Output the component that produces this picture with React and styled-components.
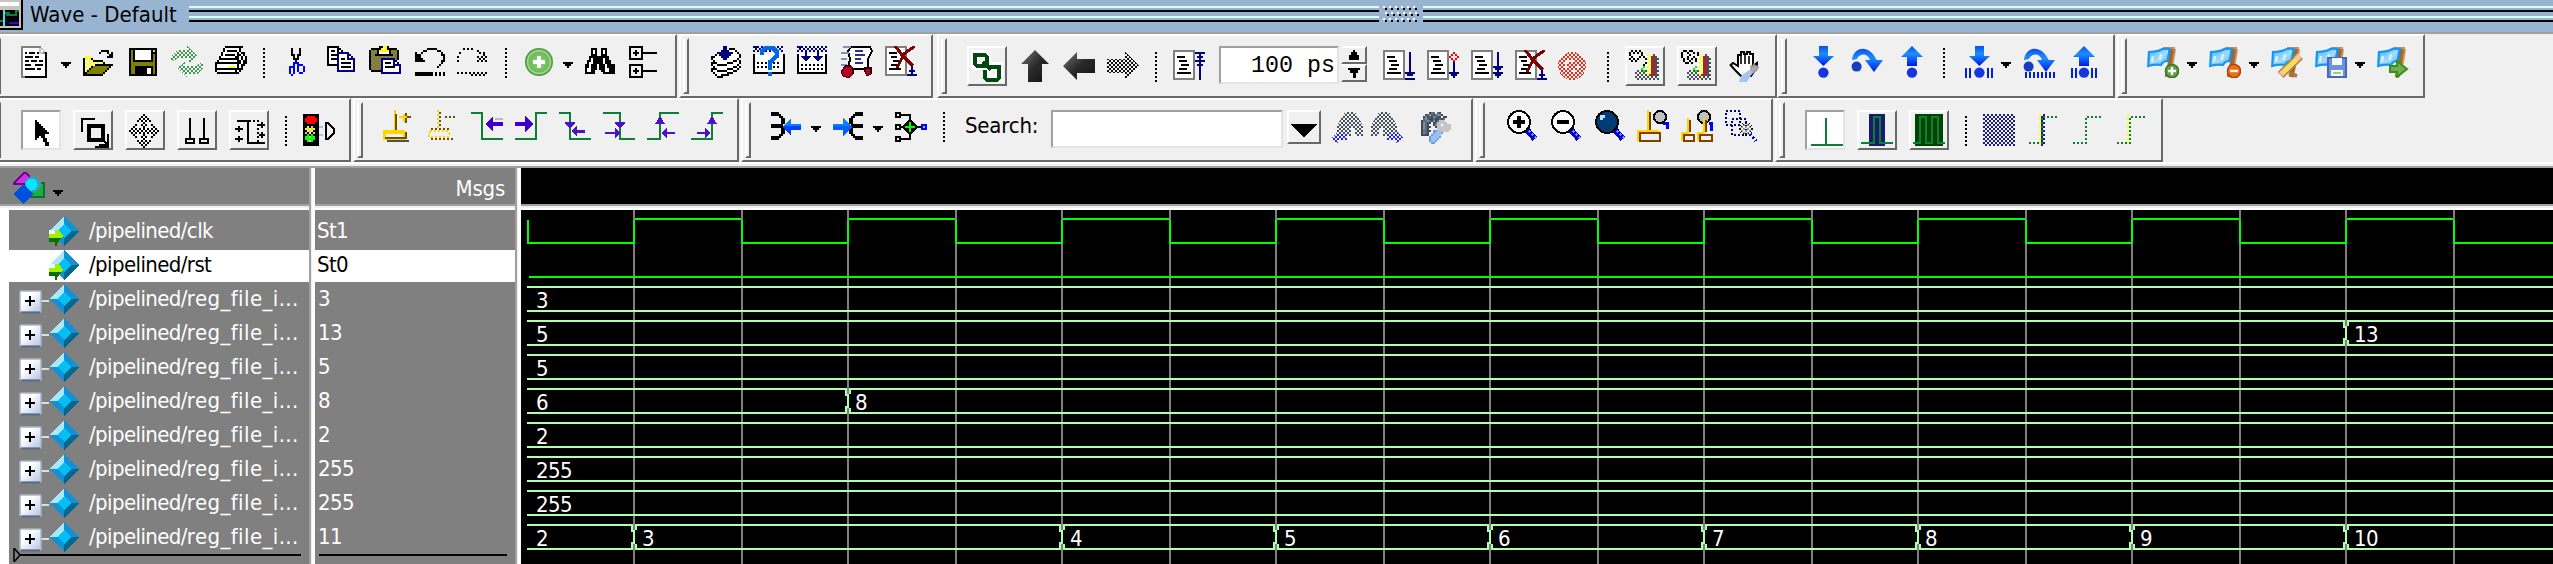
import React from 'react';
import styled, { createGlobalStyle, css } from 'styled-components';

const ui = `'DejaVu Sans Condensed', 'DejaVu Sans', sans-serif`;

const Global = createGlobalStyle`
  body { margin: 0; background: #f0f0f0; overflow: hidden; }
  #root { width: 2553px; height: 564px; }
`;

/* ---------- pixel icons ---------- */

const palette = {
  K: '#000', W: '#fff', N: '#000080', B: '#0000ff', G: '#808080', g: '#c8c8c8', Y: '#ffff00',
  O: '#808000', R: '#800000', r: '#ff0000', E: '#0b8035', P: '#3c00d0', D: '#ffd500', M: '#804000',
  s: '#505050', L: '#00ff00', d: '#3c4c58', b: '#7890a4', S: '#5c6c7a', l: '#c4c4c4', a: '#9cc0f4', A: '#6c9ce4',
};

const Svg = styled.svg`
  display: block;
  flex: none;
`;

function Pic({ w = 16, h = 16, crisp = true, children }) {
  return (
    <Svg width={w * 2} height={h * 2} viewBox={`0 0 ${w} ${h}`} fill="none" shapeRendering={crisp ? 'crispEdges' : 'auto'}>
      {children}
    </Svg>
  );
}

function Bits({ rows, x = 0, y = 0 }) {
  const byColor = {};
  rows.forEach((row, j) => {
    for (let i = 0; i < row.length; i += 1) {
      const c = row[i];
      if (palette[c]) byColor[c] = `${byColor[c] || ''}M${x + i} ${y + j}h1v1h-1z`;
    }
  });
  return Object.entries(byColor).map(([c, d]) => <path key={c} d={d} fill={palette[c]} shapeRendering="crispEdges" />);
}

const dithers = { K: '#111', N: '#1a1a80', r: '#e0301e', E: '#3f9a50', B: '#2222ff', s: '#44505c', g: '#999' };

function Patterns() {
  return (
    <Svg width="0" height="0" style={{ position: 'absolute' }} aria-hidden="true">
      <defs>
        {Object.entries(dithers).map(([k, c]) => (
          <pattern key={k} id={`dither${k}`} width="2" height="2" patternUnits="userSpaceOnUse">
            <path d="M0 0h1v1h-1zM1 1h1v1h-1z" fill={c} />
          </pattern>
        ))}
        <linearGradient id="blue" x1="0" y1="0" x2="0" y2="1">
          <stop offset="0" stopColor="#0a50e8" /><stop offset=".4" stopColor="#1a90ff" /><stop offset="1" stopColor="#0018e0" />
        </linearGradient>
        <linearGradient id="dark" x1="0" y1="0" x2="1" y2="1">
          <stop offset="0" stopColor="#777" /><stop offset=".5" stopColor="#2a2a2a" /><stop offset="1" stopColor="#111" />
        </linearGradient>
        <linearGradient id="flag" x1="0" y1="0" x2="1" y2="1">
          <stop offset="0" stopColor="#48b4ff" /><stop offset=".55" stopColor="#a4dcff" /><stop offset="1" stopColor="#38a8fc" />
        </linearGradient>
        <radialGradient id="leaf">
          <stop offset="0" stopColor="#8fd07c" /><stop offset=".7" stopColor="#6dbb58" /><stop offset="1" stopColor="#4c9440" />
        </radialGradient>
        <linearGradient id="plusBox" x1="0" y1="0" x2="1" y2="1">
          <stop offset=".35" stopColor="#fff" /><stop offset="1" stopColor="#b4c4e4" />
        </linearGradient>
      </defs>
    </Svg>
  );
}

const NewDoc = () => (
  <Pic><Bits x={1} rows={[
    'GGGGGGGGGG', 'GWWWWWWWWgg', 'GWWWWWWWWgWg', 'GWKWKKKWKggGK', 'GWWWWWWWWWWWK', 'GWKKKKWKKWWWK', 'GWWWWWWWWWWWK',
    'GWKKWKKKWKKWK', 'GWWWWWWWWWWWK', 'GWKKKWWKKKKWK', 'GWWWWWWWWWWWK', 'GWKKKKKWKKWWK', 'GWWWWWWWWWWWK', 'GWWWWWWWWWWWK',
    'GWWWWWWWWWWWK', 'GGKKKKKKKKKKK']} /></Pic>
);
const Open = () => (
  <Pic><Bits y={2} rows={[
    '.........KKKK', '........K...K.K', '.............KK', '.YYY........KKK', 'KYWYK..........', 'KWYWYKKKKK', 'KYWYWYWYWYK',
    'KWYWYWKKKKKKKKK', 'KYWYKOOOOOOOOK', 'KWYKOOOOOOOOK', 'KYKOOOOOOOOK', 'KKOOOOOOOOK', 'KKKKKKKKKK']} /></Pic>
);
const Save = () => (
  <Pic><Bits x={1} y={1} rows={[
    'KKKKKKKKKKKKKK', 'KOKWWWWWWWWKgK', 'KOKWWWWWWWWKKK', 'KOKWWWWWWWWKOK', 'KOKWWWWWWWWKOK', 'KOKWWWWWWWWKOK', 'KOKKKKKKKKKKOK',
    'KOOOOOOOOOOOOK', 'KOOOOOOOOOOOOK', 'KOOKKKKKKKKKOK', 'KOOKKKKKKWWKOK', 'KOOKKKKKKWWKOK', 'KOOKKKKKKWWKOK', 'KKKKKKKKKKKKKK']} /></Pic>
);
const Reload = () => (
  <Pic><path d="M0 8V5l3-3h5V0l5 5-4 4V6H4zM16 8v3l-3 3H8v2l-5-5 4-3v2h5z" fill="url(#ditherE)" /></Pic>
);
const Print = () => (
  <Pic><Bits rows={[
    '.....KKKKKKKKK', '....KWWWWWWWK', '....KWKKKKKWK', '...KWWWWWWWK.KK', '...KWKKKKKWKKWK', '..KWWWWWWWKKWKWK', '..KKKKKKKKKKWKWK',
    '.KWWWWWWWWWKKWKK', 'KKKKKKKKKKKKKWKK', 'KWWWWWWWWWWKWKK', 'KWWWWWWYYYWKWK', 'KKKKKKKKKKKKKK', 'KWWWWWWWWWKWK', '.KKKKKKKKKKK']} /></Pic>
);
const Cut = () => (
  <Pic><Bits x={4} y={1} rows={['.K...K', '.K...K', '.K...K', '.KK.KK', '..K.K', '..KKK', '...K', '..BBB', '..B.BBB', 'BBB.B..B', 'B.B.B..B', 'B.B.B..B', 'B.B..BB', '.B']} /></Pic>
);
const Copy = () => (
  <Pic><Bits x={1} rows={[
    'KKKKKK', 'KWWWWKK', 'KWKKWKWK', 'KWWWWNNNNNN', 'KWKKKNWWWWNN', 'KWWWWNWWWWNWN', 'KWKKKNWKKWNNNN', 'KWWWWNWWWWWWWN',
    'KWWWWNWKKKKKWN', 'KKKKKNWWWWWWWN', '.....NWKKKKKWN', '.....NWWWWWWWN', '.....NNNNNNNNN']} /></Pic>
);
const Paste = () => (
  <Pic><Bits rows={[
    '.....KKYYK', '.KKKKKYWYKKKKK', 'KGOGKYYYYYKOGOK', 'KOGOKWWWWWKGOGK', 'KGOKKKKKKKKKGOK', 'KOGOGOGOGOGOGOK', 'KGOGOGNNNNNNNOK',
    'KOGOGONWWWWWNN', 'KGOGOGNWKKKWNWN', 'KOGOGONWWWWWNNNN', 'KGOGOGNWKKKKKWWN', 'KOGOGONWWWWWWWWN', '.KKKKKNWWWWWWWWN', '......NNNNNNNNNN']} /></Pic>
);
const Undo = () => (
  <Pic><Bits x={1} y={1} rows={[
    '......KKKKK', '....KK.....KK', 'K..K.........K', 'KKK..........KK', 'KKK...........K', 'KKKK..........K', 'KKKKK........KK', '.............K', '............K', '...........K', '', '', 'KKKKKKKKK.K.K.K', 'KKKKKKKKK.K.K.K']} /></Pic>
);
const Redo = () => (
  <Pic><Bits y={1} rows={[
    '...K.K.K', '..........K', '.K.........K.K', '.............K', 'K.........K.K.K', '...........K.K', 'K.........K.K.K', '', '', '', '', '', 'K.K.K.K.K.K.K.K', '.......K.K.K.K']} /></Pic>
);
const Add = () => (
  <Pic crisp={false}>
    <circle cx="8" cy="8" r="7" fill="url(#leaf)" /><circle cx="8" cy="8" r="5.7" stroke="#9ed88c" strokeWidth=".8" />
    <path d="M7 5h2v2h2v2H9v2H7V9H5V7h2z" fill="#fff" />
  </Pic>
);
const Binoculars = () => (
  <Pic><Bits y={1} rows={[
    '...KKK..KKK', '...KWK..KWK', '...KWK..KWK', '...KKK..KKK', '..KKKKKKKKKK', '..KWKKKKKWKK', '.KKWKKKKKWKKK', '.KWWKKKKKWKKK',
    'KKWKKKWKKKWKKKK', 'KKWKKKWKKKWKKKK', 'KWWKKK.KKKWWKKK', 'KWWKK...KKWWKKK', 'KKKKK....KKKKKK']} /></Pic>
);
const Tree = () => (
  <Pic><path d="M.5.5h6v6h-6zM.5 9.5h6v6h-6zM2 3.5h3M3.5 2v3M2 12.5h3M3.5 11v3M7 3.5h7M7 12.5h7" stroke="#000" /></Pic>
);
const Stack = () => (
  <Pic><Bits x={1} rows={[
    '......NN', '......NN.KKK', '.....KNNKWWWK', '...NNNNNNNNWWK', '..KWNNNNNNWWWWK', 'KKWWWNNNNWWWWWK', 'KWWWWWNNWWWWWK', '.KWWWWWWWWWKKWK',
    'KKKWWWWWKKKWWWK', 'KWWKKKKKWWWWWK', '.KWWWWWWWWWKKWK', 'KKKWWWWWKKKWWK', 'KWWKKKKKWWWKK', '.KWWWWWWKKK', '..KWWKKKK', '...KKK']} /></Pic>
);
const Pulses = () => <Bits rows={['NNN.N.N.N.N.N.N', '.N.N.N.N.N.N.N', 'N.N.N.N.N.N.N.N']} />;
const Query = () => (
  <Pic>
    <path d="M.5 4v9.500h15V4" fill="#fff" stroke="#000" /><Pulses />
    <path d="M2 8.500h12M2 10.500h12" stroke="#000" strokeDasharray="1 1" />
    <path d="M4.500 4.500V2.500L6.500 1H10l2 2v2L8.500 8v4M8.500 13v2" stroke="#0068e8" strokeWidth="2.200" />
  </Pic>
);
const Download = () => (
  <Pic>
    <path d="M.5 4v9.500h14V4" fill="#fff" stroke="#000" /><Pulses />
    <path d="M2 9.500h12M2 11.500h12" stroke="#000" strokeDasharray="1 1" />
    <path d="M4.500 3v4M10.500 3v4" stroke="#000080" /><path d="M2 5h5L4.500 8zM8 5h5l-2.500 3z" fill="#000080" />
  </Pic>
);
const ScriptRun = () => (
  <Pic>
    <path d="M5 .5h9.500l1 2-2 4v5h-10l1-5-1-4z" fill="#fff" stroke="#000" />
    <path d="M1 .5h4M0 3.500h4M0 6.500h3M0 9.500h3" stroke="#8c8cbc" />
    <path d="M7 2.500h4M7 4.500h5M7 6.500h3M7 8.500h4" stroke="#303080" />
    <path d="M2 10h3l1 1v3l-2 2-3-1-1-2z" fill="#b80024" stroke="#300" strokeWidth=".6" /><path d="M12 11h3v3l-2 1-1-2z" fill="#b80024" stroke="#300" strokeWidth=".6" />
  </Pic>
);
const Kill = () => (
  <Pic>
    <path d="M.5.5h10v14H.5z" fill="#fff" stroke="#808080" />
    <path d="M2 3.500h4M3 5.500h3M4 7.500h4M3 9.500h3M2 11.500h6" stroke="#000" />
    <path d="M5 0l4 5-3 6M8 4l6 6M15 0 8 5" stroke="#800000" strokeWidth="1.500" />
    <path d="M13.500 10v4M12 12.500h3M11 14.500h5" stroke="#000080" />
  </Pic>
);

const Link = () => (
  <Pic w={18} h={18}>
    <path d="M3 3h6v6H3zM9 9h6v6H9z" stroke="#fff" strokeWidth="4" />
    <path d="M3 3.500h5l1 1V9H4L3 8zM9 9.500h6V15l-1 1H9l-1-1v-4M7 7l4 4" stroke="#004a10" strokeWidth="2" />
  </Pic>
);
const Up = () => <Pic crisp={false}><path d="M8 0 15 7h-3.500v9h-7V7H1z" fill="url(#dark)" /></Pic>;
const Left = () => <Pic crisp={false}><path d="M0 8 7 1v3.500h9v7H7V15z" fill="url(#dark)" /></Pic>;
const Right = () => <Pic><path d="M16 8 9 1v3.500H0v7h9V15z" fill="url(#ditherK)" /></Pic>;

function DocMark({ children }) {
  return (
    <Pic>
      <path d="M.5.500h10v14H.5z" fill="#fff" stroke="#808080" />
      <path d="M2 3.500h4M3 5.500h4M4 7.500h4M3 9.500h4M2 11.500h7" stroke="#000" />
      {children}
    </Pic>
  );
}
const Restart = () => <DocMark><path d="M11 1.500h5M13.500 1v14M12 3.500h3M11 5.500h5M12 7.500h3" stroke="#000080" /></DocMark>;
const Run = () => <DocMark><path d="M13.500 1v11M11 11.500h5M12 12.500h3M11 14.500h5" stroke="#000080" /></DocMark>;
const Continue = () => (
  <DocMark>
    <Bits x={11} y={1} rows={['..r', '.r.r', 'r...r', '.r.r', '..r']} />
    <path d="M13.500 6v8M11 11.500h5M12 12.500h3" stroke="#000080" />
  </DocMark>
);
const RunAll = () => <DocMark><path d="M13.500 1v13M11 8.500h5M12 9.500h3M11 11.500h5M12 12.500h3" stroke="#000080" /></DocMark>;
const Stop = () => (
  <Pic><circle cx="7.500" cy="8" r="7" fill="url(#ditherr)" /><path d="M5 5.500h3M4.500 6v4M9 8.500h3M7 10.500h2" stroke="#f8f0f0" /></Pic>
);
const Profile = ({ wide }) => (
  <Pic w={18} h={18}>
    <Bits x={1} y={1} rows={wide
      ? ['.KK.KK.', 'K..K..K.K', 'K...K...K', 'K..K..K.K', '.K.K.K.K', '.K..K..K', '..KK.K']
      : ['.K.K.K', 'K.K.K.K', 'K.....K', '.K...K.K', 'K.K.K...K', '.K.K....K', '........K', '.......K']} />
    <path d="M4 11h12v5H4zM12 4h4v8h-4z" fill="url(#dithers)" />
    <Bits x={7} y={3} rows={['...Y..s', '..W.Y.rs', '...YWr.s', '..WWY.r', '...YWr.s', '..WWY.r', '.L.YWr.s', 'L.WWY.r', '.L.YWr.s', '..WWY.r', '...Y.r.s']} />
  </Pic>
);
const Hand = () => (
  <Pic crisp={false}>
    <path d="M4.500 8V2.500h1.500V1h1.500v1h1.500V1h1.500v1H12v6l2-1.500v2L11 13H6L3 10 .8 7.500 2 6.500z" fill="#fff" stroke="#000" strokeWidth="1" />
    <path d="M6 3v4M8 2v5M10 3v4" stroke="#000" strokeWidth=".8" />
    <path d="M11 8h3v2l-3 2zM12 7l3 2" fill="#aaa" stroke="#999" strokeWidth=".7" /><path d="M6 13l4-3 2 1-3 5-4 0z" fill="#a8c4ee" />
  </Pic>
);

const Bars = ({ d = 'M1.500 11v5M3.500 11v5M12.500 11v5M14.500 11v5' }) => <path d={d} stroke="#0020e0" shapeRendering="crispEdges" />;
const Into = ({ bars }) => (
  <Pic crisp={false}><path d="M6 0h4.500v5h3L8.200 10 3 5h3z" fill="url(#blue)" /><circle cx="8.200" cy="13.300" r="2.600" fill="#1436dc" />{bars && <Bars />}</Pic>
);
const Over = ({ bars }) => (
  <Pic crisp={false}>
    <path d="M.5 7C1 .5 9-1.500 12.800 7H16l-4.500 6L7 7h2.500C8 3 4 4 3 6.500z" fill="url(#blue)" /><circle cx="2.800" cy="10.300" r="2.500" fill="#183cc4" />
    {bars && <Bars d="M1.500 13v3M3.500 13v3M5.500 13v3M7.500 13v3M9.500 13v3M11.500 13v3M13.500 13v3M15.500 13v3" />}
  </Pic>
);
const Out = ({ bars }) => (
  <Pic crisp={false}><path d="M8.500 0 14 5.500h-3v4.500H6V5.500H3z" fill="url(#blue)" /><circle cx="8.500" cy="13.300" r="2.600" fill="#1436dc" />{bars && <Bars d="M2.500 11v5M4.500 11v5M12.500 11v5M14.500 11v5" />}</Pic>
);

function Flag({ children }) {
  return (
    <Pic crisp={false}>
      <path d="M12.700 1.500 11.500 9 10 15.500" stroke="#9a6a30" strokeWidth="2.400" /><path d="M8 1h6M14 1.500 12.800 9" stroke="#c89058" strokeWidth="1" />
      <path d="M1 3Q3.500 3 6 2.300 8 1 11.300 1.500L10.300 7.500Q8 7.500 7 9.500 4 9 .6 10z" fill="url(#flag)" stroke="#1494f4" strokeWidth="1.100" />
      <path d="M3 5l-.6 3M7 4l-.6 3" stroke="#d8f2ff" strokeWidth="1.200" />
      {children}
    </Pic>
  );
}
const FlagAdd = () => <Flag><circle cx="12.500" cy="12.500" r="3.300" fill="#62a040" stroke="#3e7028" strokeWidth=".7" /><path d="M12.500 10.500v4M10.500 12.500h4" stroke="#fff" strokeWidth="1.200" /></Flag>;
const FlagDel = () => <Flag><circle cx="12.500" cy="12.500" r="3.300" fill="#f06c10" stroke="#b04010" strokeWidth=".7" /><path d="M10.500 12.500h4" stroke="#fff" strokeWidth="1.200" /></Flag>;
const FlagEdit = () => <Flag><path d="M4.800 14.500 14.500 5" stroke="#b88040" strokeWidth="4.200" /><path d="M6 13.300 13 6.500" stroke="#f8dc60" strokeWidth="2.600" /><path d="M12.800 6.500 14.500 4.800M5 14.200l1-1" stroke="#f0c8a0" strokeWidth="2.800" /><path d="M9 13.500l4 1.500" stroke="#a87440" strokeWidth="1.800" /></Flag>;
const FlagSave = () => <Flag><path d="M6.500 6h9v9.500h-9z" fill="#6c92e0" stroke="#4468bc" /><path d="M8.500 6h5v3.500h-5zM8 12h6v3H8z" fill="#f4f8ff" /><path d="M9 13.500h4" stroke="#98d858" /></Flag>;
const FlagGo = () => <Flag><path d="M6.500 10H10V7.500L15 11.500 10 15.500V13H6.500z" fill="#6cb050" stroke="#389018" /></Flag>;

/* second row */
const Pointer = () => (
  <Pic w={18} h={18}><Bits x={6} y={4} rows={['K', 'KK', 'KKK', 'KKKK', 'KKKKK', 'KKKKKK', 'KKKKKKK', 'KKKKK', 'KK.KK', 'K...KK', '....KK', '.....KK', '.....KK']} /></Pic>
);
const ZoomArea = () => (
  <Pic w={18} h={18}>
    <path d="M3.500 10V3.500H10M10 17.500h7" stroke="#000" /><path d="M7 7h7v7H7z" stroke="#000" strokeWidth="2" /><path d="M13 13l3 3M16.500 11v6M12 16.500h5" stroke="#000" />
  </Pic>
);
const Pan = () => (
  <Pic w={18} h={18}><Bits x={1} y={1} rows={[
    '.......K', '......KWK', '.....KWKWK', '....K.KWK.K', '......WKW', '...K..KWK..K', '..KW...K...WK', '.KWKWKWKWKWKWK', 'KWKWKWKWKWKWKWK',
    '.KWKWKWKWKWKWK', '..KW...K...WK', '...K..KWK..K', '......WKW', '....K.KWK.K', '.....KWKWK', '......KWK', '.......K']} /></Pic>
);
const TwoCursors = () => (
  <Pic w={18} h={18}><path d="M5.500 3v10M12.500 3v10M3.500 13.500h4v2h-4zM10.500 13.500h4v2h-4z" stroke="#000" /></Pic>
);
const EditWave = () => (
  <Pic w={18} h={18}>
    <path d="M3 4.500h5.500v11H17M2 8.500h4M4 7v3M2 13.500h4M4 12v3M14 6.500h3M15.500 5v3M14 11.500h3M15.500 10v3" stroke="#000" /><path d="M9 4.500h4.500v11" stroke="#000" strokeDasharray="1 1" />
  </Pic>
);
const Traffic = () => (
  <Pic>
    <path d="M0 0h8v16H0z" fill="#000" />
    <Bits rows={['', '..rrrr', '.rrrrrr', '.rrrrrr', '..rrrr', '', '..Y.g', '.YgYgY', '..YgY...', '.g.Y.g', '..L.L...', '.LLgLL', '.LLLLL', '..LgL', '']} />
    <path d="M8 6.500h2M8 10.500h2M15 8.500h1" stroke="#87ceeb" /><path d="M11.500 4.500h1l3 3v2l-3 3h-1z" stroke="#000" />
  </Pic>
);
const CursorAdd = () => (
  <Pic>
    <path d="M6 0v10M0 10.500h5M1 13.500v-3h10" stroke="#ffd500" strokeWidth="1.200" /><path d="M.5 11.500h10v3h-10z" stroke="#ffd500" />
    <path d="M1 14h11M11.500 11v3M6.500 2v8M9 3.500h5M11.500 1.500v5" stroke="#6b5000" /><path d="M8 3.500h4M10.500 2v4" stroke="#ffd500" /><path d="M2 15.500h11" stroke="#505050" />
  </Pic>
);
const CursorDel = () => (
  <Pic><path d="M5.500 0v9" stroke="#ffd500" strokeDasharray="1 1" /><path d="M6.500 1v9M9 3.500h5M2 14.500h11" stroke="#6b5000" strokeDasharray="1 1" /><path d="M1.500 10.500h9l1 2-1 1h-9l-1-1z" stroke="#ffd500" strokeDasharray="1 1" /><path d="M2 9.500h9" stroke="#6b5000" strokeDasharray="1 1" /></Pic>
);
const edge = '#0b8035';
const PrevEdge = () => <Pic><path d="M0 1.500h5.500v13H16" stroke={edge} /><path d="M12 4.500h4" stroke="#bbb" /><path d="M7 7 11 3v3h5v2h-5v3z" fill="#3c00d0" /></Pic>;
const NextEdge = () => <Pic><path d="M0 14.500h10.500v-13H16" stroke={edge} /><path d="M0 6h5V3l4 4-4 4V8H0z" fill="#3c00d0" /></Pic>;
const Purple = ({ d }) => <path d={d} fill="#4a12d0" />;
const FallPrev = () => <Pic><path d="M0 1.500h5.500v13H16" stroke={edge} /><Purple d="M3 6h5v1L5.500 9 3 7zM6 10.500 9 8v2h4v1.500H9V13z" /></Pic>;
const FallNext = () => <Pic><path d="M0 1.500h8.500v13H16" stroke={edge} /><Purple d="M6 6h5v1L8.500 9 6 7zM1 11v1h5v2l3-2.500L6 9v2z" /></Pic>;
const RisePrev = () => <Pic><path d="M0 14.500h6.500v-13H16" stroke={edge} /><Purple d="M4 7l2.500-4L9 7zM7 11.500 10 9v2h4v1h-4v2z" /></Pic>;
const RiseNext = () => <Pic><path d="M0 14.500h10.500v-13H16" stroke={edge} /><Purple d="M8 7l2.500-4L13 7zM3 11v1h4v2l3-2.500L7 9v2z" /></Pic>;
const Expand = ({ flip }) => (
  <Pic>
    <g transform={flip ? 'translate(15 0) scale(-1 1)' : undefined}>
      <Bits rows={['KKKK', 'KKKKK', '....KK', '.....KK', '.....KK', '.....KK', 'KKKKKK', 'KKKKKK', '.....KK', '.....KK', '.....KK', '....KK', 'KKKKK', 'KKKK']} />
    </g>
    {flip ? <path d="M0 6h5V3l4.500 4.500L5 12V9H0z" fill="#0060ff" /> : <path d="M15 6h-5V3L5.500 7.500 10 12V9h5z" fill="#0040ff" />}
    {flip ? <path d="M0 6h5V3l4 4H0z" fill="#0a80ff" /> : <path d="M15 6h-5V3L6 7h9z" fill="#0a80ff" />}
  </Pic>
);
const Junction = () => (
  <Pic>
    <path d="M.5.5h2v2h-2zM.5 6.500h2v2h-2zM.5 12.500h2v2h-2zM3 1.500h4.500V4M3 13.500h4.500V11M3 7.500h2M10 7.500h3" stroke="#000" />
    <path d="M7.500 4 11 7.500 7.500 11 4 7.500z" fill="#000" stroke="#000" /><path d="M7.500 5v5M5 7.500h5" stroke="#0f0" /><path d="M13.500 6.500h2v2h-2z" stroke="#00f" fill="#8cf" />
  </Pic>
);
const FindPrev = ({ flip }) => (
  <Pic>
    <g transform={flip ? 'translate(16 0) scale(-1 1)' : undefined}>
      <path d="M3 12V7l2-4 2-3h5l2 3 2 4v5h-4V8h-2v4z" fill="url(#dithers)" /><path d="M3 10l-3 3 3 3 1-2h4v-3H4z" fill="url(#ditherB)" />
    </g>
  </Pic>
);
const FindOpts = () => (
  <Pic><Bits rows={[
    '....dSS.Sd', '..dSbSdSbbd', '.dbdSdbSdd.dd', '.SbSddSddSdS', 'dSSbSdbdSlll', 'dbSdd.dSllgll', 'dbSd..dbllWglll', 'dbSdd..dlggllgl', 'dbSd....gllglll', 'dSSdd.AAaallll',
    'dbSd..AaaaA', 'dddd.Aaaaa', '....AaaaaA', '....AaaaA', '....AaaA', '.....AA']} /></Pic>
);
const Lens = ({ fill = '#fff', children }) => (
  <Pic>
    <path d="M10 10l4 4.500" stroke="#0000d0" strokeWidth="3" /><path d="M11 10.500l4 4" stroke="#8090ff" strokeWidth=".8" strokeDasharray="1 1" />
    <circle cx="6" cy="6" r="5.500" fill={fill} stroke="#000" />{children}
  </Pic>
);
const ZoomIn = () => <Lens><path d="M3 6h6M6 3v6" stroke="#000" strokeWidth="2" /></Lens>;
const ZoomOut = () => <Lens><path d="M3 6h6" stroke="#000" strokeWidth="2" /></Lens>;
const ZoomFull = () => <Lens fill="#003c78"><path d="M3 5V3h2" stroke="#b8e0ff" strokeWidth="1.500" /></Lens>;
const ZoomCursor = () => (
  <Pic>
    <path d="M5.500 0v10.500h-5v5" stroke="#ffd500" /><path d="M6.500 1v10M1.500 12v-.5h10v4h-10z" stroke="#804000" /><path d="M0 10.500h11" stroke="#ffd500" />
    <circle cx="11.500" cy="3.500" r="3" fill="#c0c0c0" stroke="#000" /><path d="M13 6.500h2v3" stroke="#00f" strokeWidth="1.500" />
  </Pic>
);
const ZoomTwo = () => (
  <Pic>
    <circle cx="11.500" cy="3.500" r="3" fill="#c0c0c0" stroke="#000" /><path d="M14 6.500h1v4" stroke="#00f" strokeWidth="1.500" />
    <path d="M3.500 4v7.500H.500v4M11.500 4v7.500H8.500v4" stroke="#ffd500" /><path d="M4.500 5v6M1.500 12.500h5v3h-5zM12.500 5v6M9.500 12.500h6v3h-6z" stroke="#804000" />
  </Pic>
);
const ZoomRange = () => (
  <Pic>
    <path d="M.5.5h7v7h-7zM3.500 4.500h7v8h-7z" stroke="#000080" strokeDasharray="1 1" /><path d="M8 7h5v5H8z" fill="url(#ditherg)" />
    <circle cx="10.500" cy="9.500" r="3" stroke="url(#ditherK)" /><path d="M12.500 12l3 3.500" stroke="#00f" strokeWidth="1.500" strokeDasharray="1 1" />
  </Pic>
);
const ModeLine = () => <Pic w={18} h={18}><path d="M9.500 3v13.500M2 16.500h16" stroke={edge} /></Pic>;
const ModePulse = () => <Pic w={18} h={18}><path d="M5 1h8v16H5z" fill="#1a1a6e" /><path d="M1 15.500h6.500v-13h3v13H17" stroke={edge} /></Pic>;
const ModeClock = () => <Pic w={18} h={18}><path d="M2 1h14v16H2z" fill="#004400" /><path d="M1 15.500h3.500v-13h3v13h3v-13h3v13H17" stroke={edge} /></Pic>;
const Hatch = () => <Pic><path d="M0 0h16v16H0z" fill="url(#ditherN)" /></Pic>;
const Step = ({ navy, yellow }) => (
  <Pic>
    {navy && <path d="M6 0h3v16H6z" fill="url(#ditherN)" />}
    <path d="M1 14.500h7M8 1.500h7M7.500 2v12" stroke={edge} strokeDasharray="1 1" />
    {yellow && <path d="M6.500 0v15" stroke="#ff0" strokeDasharray="1 1" />}
  </Pic>
);

/* ---------- window chrome ---------- */

const Window = styled.div`
  width: 2553px;
  height: 564px;
  overflow: hidden;
  background: #f0f0f0;
  font-family: ${ui};
  font-size: 22px;
`;

const TitleBar = styled.header`
  display: flex;
  align-items: flex-start;
  height: 32px;
  background: #99b4d1;
  border-bottom: 2px solid #a0a0a0;
`;

const Title = styled.h1`
  margin: 0 0 0 7px;
  width: 159px;
  font-size: 22px;
  font-weight: 400;
  line-height: 29px;
  letter-spacing: 0.05px;
  white-space: nowrap;
  color: #000;
`;

const Stripes = styled.div`
  width: ${(p) => (p.$w ? `${p.$w}px` : 'auto')};
  flex: ${(p) => (p.$w ? 'none' : '1')};
  height: 16px;
  margin-top: 6px;
  background: linear-gradient(#d4ffff 0 2px, #99b4d1 2px 4px, #000 4px 6px, #99b4d1 6px 10px, #d4ffff 10px 12px, #99b4d1 12px 14px, #000 14px 16px);
`;

const GripDots = styled.div`
  width: 36px;
  margin: 6px 4px 0;
`;

const ToolRow = styled.div`
  display: flex;
  height: 64px;
  background: #f0f0f0;
`;

const Group = styled.section`
  box-sizing: border-box;
  flex: none;
  display: flex;
  align-items: flex-start;
  width: ${(p) => p.$w}px;
  height: 64px;
  margin-left: ${(p) => p.$ml || 0}px;
  border: 2px solid;
  border-color: #fff #696969 #696969 #fff;
`;

const Grip = styled.span`
  box-sizing: border-box;
  flex: none;
  width: 6px;
  height: 56px;
  margin: 2px 0 0 2px;
  border: 2px solid;
  border-color: #f0f0f0 #696969 #696969 #fff;
`;

const Tool = styled.span`
  flex: none;
  width: 32px;
  height: 32px;
  margin: ${(p) => p.$top ?? 10}px 0 0 ${(p) => p.$ml ?? 12}px;
`;

const Button = styled.span`
  box-sizing: border-box;
  flex: none;
  width: 40px;
  height: 40px;
  margin: 10px 0 0 ${(p) => p.$ml ?? 12}px;
  border: 2px solid;
  ${(p) => (p.$on
    ? css`background: #fff; border-color: #a0a0a0 #e3e3e3 #e3e3e3 #a0a0a0;`
    : css`border-color: #fff #696969 #696969 #fff;`)}
`;

const Dots = styled.span`
  flex: none;
  width: 2px;
  height: 30px;
  margin: ${(p) => p.$top ?? 12}px 0 0 ${(p) => p.$ml ?? 16}px;
  background: repeating-linear-gradient(#000 0 2px, transparent 2px 4px);
`;

const Caret = styled.span`
  flex: none;
  width: 10px;
  height: 6px;
  margin: ${(p) => p.$top ?? 26}px 2px 0 ${(p) => p.$ml ?? 8}px;
  background: #000;
  clip-path: polygon(0 0, 100% 0, 100% 33%, 80% 33%, 80% 66%, 60% 66%, 60% 100%, 40% 100%, 40% 66%, 20% 66%, 20% 33%, 0 33%);
`;

const Entry = styled.span`
  box-sizing: border-box;
  flex: none;
  width: ${(p) => p.$w}px;
  height: ${(p) => p.$h}px;
  margin: 10px 0 0 ${(p) => p.$ml}px;
  padding-right: 2px;
  border: 2px solid;
  border-color: #a0a0a0 #e3e3e3 #e3e3e3 #a0a0a0;
  background: #fff;
  text-align: right;
  font: 23.3px/37px 'Liberation Mono', monospace;
`;

const Spinner = styled.span`
  flex: none;
  display: flex;
  flex-direction: column;
  width: 26px;
  margin: 10px 0 0 2px;
`;

const SpinHalf = styled.span`
  box-sizing: border-box;
  display: flex;
  justify-content: center;
  align-items: center;
  height: 18px;
  border: 2px solid;
  border-color: #fff #696969 #696969 #f0f0f0;
`;

const Combo = styled.span`
  box-sizing: border-box;
  flex: none;
  display: flex;
  justify-content: center;
  align-items: flex-end;
  width: 34px;
  height: 34px;
  margin: 10px 0 0 4px;
  padding-bottom: 4px;
  border: 2px solid;
  border-color: #fff #696969 #696969 #fff;
`;

const Label = styled.label`
  flex: none;
  width: 86px;
  margin: 10px 0 0 20px;
  line-height: 32px;
  font-size: 22px;
  letter-spacing: -0.2px;
`;

/* ---------- wave pane ---------- */

const Pane = styled.main`
  display: grid;
  grid-template-columns: 309px 6px 200px 6px 1fr;
  grid-template-rows: 36px 6px 354px;
  border-top: 2px solid #a0a0a0;
  margin-top: 4px;
  box-shadow: 0 -2px 0 #f0f0f0, 0 -4px 0 #fff;
`;

const RowLine = styled.div`
  grid-column: ${(p) => p.$col};
  background: linear-gradient(#a0a0a0 0 2px, #f0f0f0 2px 4px, #fff 4px 6px);
`;

const Sash = styled.div`
  grid-row: 1 / 4;
  grid-column: ${(p) => p.$col};
  background: linear-gradient(90deg, #a0a0a0 0 2px, #f0f0f0 2px 3px, #fff 3px 6px);
`;

const Head = styled.div`
  grid-row: 1;
  grid-column: ${(p) => p.$col};
  display: flex;
  justify-content: ${(p) => (p.$end ? 'flex-end' : 'flex-start')};
  background: ${(p) => (p.$black ? '#000' : '#808080')};
  color: #fff;
  line-height: 41px;
  letter-spacing: -0.2px;
  padding: ${(p) => p.$pad || '0'};
`;

const Column = styled.div`
  grid-row: 3;
  grid-column: ${(p) => p.$col};
  background: #808080;
  border-left: ${(p) => p.$gutter || 0}px solid #fff;
  padding-top: 6px;
  box-sizing: border-box;
  overflow: hidden;
`;

const WaveArea = styled.div`
  grid-row: 3;
  grid-column: 5;
  background: #000;
`;

const Signal = styled.div`
  display: flex;
  height: 34px;
  align-items: flex-start;
  box-sizing: border-box;
  color: ${(p) => (p.$on ? '#000' : '#fff')};
  background: ${(p) => (p.$on ? 'linear-gradient(#fff 0 32px, #808080 32px)' : 'none')};
  line-height: 30px;
  font-size: 22px;
  letter-spacing: -0.6px;
  white-space: pre;
  padding-left: ${(p) => p.$pl || 0}px;
`;

const Name = styled.span`
  margin-left: 10px;
`;

const Tail = styled.span`
  letter-spacing: 0.4px;
`;

const EndLine = styled.div`
  display: flex;
  align-items: center;
  height: 14px;
  margin: -8px 8px 0 4px;

  &::after {
    content: '';
    flex: 1;
    height: 2px;
    background: #000;
  }
`;

function Expander() {
  return (
    <Svg width="39" height="30" viewBox="0 0 39 30">
      <path d="M30 17h9" stroke="#ddd" strokeWidth="2" />
      <rect x="10" y="7" width="21" height="21" rx="1" fill="url(#plusBox)" stroke="#a8b4c8" strokeWidth="1.500" />
      <path d="M11 28.500h19" stroke="#5c6c88" strokeWidth="2" />
      <path d="M15 17h10M20 12v10" stroke="#000" strokeWidth="2" />
    </Svg>
  );
}

const Blank = styled.span`
  width: 39px;
`;

function Diamond({ input }) {
  return (
    <Svg width="30" height="30" viewBox="0 0 15 15" shapeRendering="crispEdges">
      <path d="M7.500 0V7.500H0z" fill="#a8e8f8" /><path d="M7.500 0 15 7.500H7.500z" fill="#1490d4" />
      <path d="M0 7.500h7.500V15z" fill="#1490d4" /><path d="M15 7.500 7.500 15V7.500z" fill="#006890" />
      <path d="M7.500 4 11 7.500 7.500 11 4 7.500z" fill="#00c0f4" />
      {input && <><path d="M0 7h3v2H0z" fill="#e8f8ff" /><path d="M0 9h3V7h2l2 3-3 3H0z" fill="#a0f000" /><path d="M0 11h6l-2 3v1H3v-2H0z" fill="#087000" /></>}
    </Svg>
  );
}

const values = ['3', '13', '5', '8', '2', '255', '255', '11'];
const edges = Array.from({ length: 9 }, (_, k) => [633 + 214 * k, 741 + 214 * k]).flat();
const buses = [
  [[527, '3']], [[527, '5'], [2345, '13']], [[527, '5']], [[527, '6'], [847, '8']], [[527, '2']], [[527, '255']], [[527, '255']],
  [[527, '2'], [633, '3'], [1061, '4'], [1275, '5'], [1489, '6'], [1703, '7'], [1917, '8'], [2131, '9'], [2345, '10']],
];

function Waves() {
  let clock = 'M528 220V243H';
  edges.forEach((x, i) => { clock += i % 2 ? `${x + 1}V243H` : `${x + 1}V219H`; });
  clock += '2560';
  return (
    <Svg width="2032" height="354" viewBox="521 210 2032 354" shapeRendering="crispEdges">
      <path d={edges.map((x) => `M${x} 210h2v354h-2z`).join('')} fill="#808080" />
      <path d={clock} fill="none" stroke="#00ff00" strokeWidth="2" />
      <path d={edges.map((x) => `M${x} 218h2v2h-2z`).join('')} fill="#808080" />
      <path d="M529 277H2553" stroke="#00ff00" strokeWidth="2" />
      {buses.map((marks, r) => {
        const t = 286 + r * 34;
        return (
          <g key={t}>
            <path d={`M527 ${t}h2026v2H527zM527 ${t + 24}h2026v2H527z`} fill="#b0ffb0" />
            {marks.map(([x, v], i) => (
              <g key={x}>
                {i > 0 && <path d={`M${x} ${t}h2v26h-2z`} fill="#808080" />}
                {i > 0 && <path d={`M${x - 2} ${t}h2v8h-2zM${x + 2} ${t}h2v6h-2zM${x} ${t + 6}h2v14h-2zM${x - 2} ${t + 18}h2v8h-2zM${x + 2} ${t + 20}h2v6h-2z`} fill="#b0ffb0" />}
                <text x={x + (v === '8' ? 8 : 9)} y={t + 22} fill="#fff" fontFamily={ui} fontSize="22" letterSpacing="-0.6">{v}</text>
              </g>
            ))}
          </g>
        );
      })}
    </Svg>
  );
}

const T = ({ i: Icon, ml, top, ...rest }) => <Tool $ml={ml} $top={top}><Icon {...rest} /></Tool>;
const Btn = ({ i: Icon, ml, on, ...rest }) => <Button $ml={ml} $on={on}><Icon {...rest} /></Button>;

export default function App() {
  return (
    <Window>
      <Global />
      <Patterns />
      <TitleBar>
        <Svg width="23" height="30" viewBox="0 0 23 30" shapeRendering="crispEdges">
          <path d="M0 0h23v30H0z" fill="#000" /><path d="M0 0h21v28H0z" fill="#c8c4c0" /><path d="M0 2h19v4H0z" fill="#fff" /><path d="M0 10h19v16H0z" fill="#000" />
          <path d="M0 21h4v-8h6M6 15h10v-4h3M9 23h3" stroke="#0b8035" strokeWidth="2" fill="none" /><path d="M4 10v16" stroke="#40e0f0" strokeWidth="1.500" /><path d="M9 23h10" stroke="#3c00d0" strokeWidth="2" />
        </Svg>
        <Title>Wave - Default</Title>
        <Stripes $w={1190} />
        <GripDots>
          <Svg width="36" height="16" viewBox="0 0 18 8" shapeRendering="crispEdges">
            {[0, 1, 2, 3, 4, 5].map((i) => (
              <g key={i}>
                <path d={`M${i * 3} 0h1v1h-1zM${i * 3 + 1} 3h1v1h-1zM${i * 3} 6h1v1h-1z`} fill="#fff" />
                <path d={`M${i * 3 + 1} 1h1v1h-1zM${i * 3 + 2} 4h1v1h-1zM${i * 3 + 1} 7h1v1h-1z`} fill="#000" />
              </g>
            ))}
          </Svg>
        </GripDots>
        <Stripes />
      </TitleBar>

      <ToolRow>
        <Group $w={686} $ml={-9}>
          <Grip />
          <T i={NewDoc} ml={18} /><Caret $ml={10} /><T i={Open} ml={10} /><T i={Save} /><T i={Reload} /><T i={Print} />
          <Dots /><T i={Cut} ml={16} /><T i={Copy} /><T i={Paste} /><T i={Undo} /><T i={Redo} />
          <Dots /><T i={Add} ml={16} /><Caret /><T i={Binoculars} ml={10} /><T i={Tree} />
        </Group>
        <Group $w={254} $ml={2}>
          <Grip />
          <T i={Stack} ml={20} /><T i={Query} /><T i={Download} /><T i={ScriptRun} /><T i={Kill} />
        </Group>
        <Group $w={840} $ml={4}>
          <Grip />
          <Btn i={Link} ml={20} /><T i={Up} top={14} /><T i={Left} top={14} /><T i={Right} top={14} />
          <Dots $top={16} /><T i={Restart} top={14} ml={16} />
          <Entry $w={120} $h={38} $ml={14}>100 ps</Entry>
          <Spinner>
            <SpinHalf><Svg width="12" height="10" viewBox="0 0 12 10" shapeRendering="crispEdges"><path d="M5 0h2v2h2v3h2v5H1V5h2V2h2z" /></Svg></SpinHalf>
            <SpinHalf><Svg width="12" height="10" viewBox="0 0 12 10" shapeRendering="crispEdges"><path d="M0 0h12v2h-2v3H8v5H5V5H2V2H0z" /></Svg></SpinHalf>
          </Spinner>
          <T i={Run} top={14} ml={16} /><T i={Continue} top={14} /><T i={RunAll} top={14} /><T i={Kill} top={14} /><T i={Stop} top={14} ml={10} />
          <Dots $top={16} $ml={18} /><Btn i={Profile} ml={16} /><Btn i={Profile} wide /><T i={Hand} top={14} />
        </Group>
        <Group $w={338}>
          <Grip />
          <T i={Into} ml={20} /><T i={Over} /><T i={Out} /><Dots /><T i={Into} bars ml={18} /><Caret $ml={6} /><T i={Over} bars ml={10} /><T i={Out} bars />
        </Group>
        <Group $w={308} $ml={2}>
          <Grip />
          <T i={FlagAdd} ml={20} /><Caret /><T i={FlagDel} ml={10} /><Caret /><T i={FlagEdit} ml={10} /><T i={FlagSave} /><Caret /><T i={FlagGo} ml={10} />
        </Group>
      </ToolRow>

      <ToolRow>
        <Group $w={360} $ml={-9}>
          <Grip />
          <Btn i={Pointer} on ml={20} /><Btn i={ZoomArea} /><Btn i={Pan} /><Btn i={TwoCursors} /><Btn i={EditWave} />
          <Dots $top={16} /><T i={Traffic} top={14} ml={16} />
        </Group>
        <Group $w={386} $ml={2}>
          <Grip />
          <T i={CursorAdd} ml={20} /><T i={CursorDel} /><T i={PrevEdge} /><T i={NextEdge} /><T i={FallPrev} /><T i={FallNext} /><T i={RisePrev} /><T i={RiseNext} />
        </Group>
        <Group $w={732} $ml={2}>
          <Grip />
          <T i={Expand} ml={20} top={12} /><Caret /><T i={Expand} flip ml={10} top={12} /><Caret /><T i={Junction} ml={10} top={12} />
          <Dots /><Label>Search:</Label><Entry $w={232} $h={38} $ml={0} />
          <Combo><Svg width="26" height="14" viewBox="0 0 26 14" shapeRendering="crispEdges"><path d="M0 0h26L13 14z" /></Svg></Combo>
          <T i={FindPrev} ml={10} top={12} /><T i={FindPrev} flip ml={8} top={12} /><T i={FindOpts} ml={18} top={12} />
        </Group>
        <Group $w={298} $ml={2}>
          <Grip />
          <T i={ZoomIn} ml={22} /><T i={ZoomOut} /><T i={ZoomFull} /><T i={ZoomCursor} ml={10} /><T i={ZoomTwo} /><T i={ZoomRange} />
        </Group>
        <Group $w={388} $ml={2}>
          <Grip />
          <Btn i={ModeLine} on ml={20} /><Btn i={ModePulse} /><Btn i={ModeClock} />
          <Dots $top={16} /><T i={Hatch} top={14} ml={16} /><T i={Step} navy yellow top={14} /><T i={Step} top={14} /><T i={Step} yellow top={14} />
        </Group>
      </ToolRow>

      <Pane>
        <Head $col="1" $pad="4px 0 0 13px">
          <Svg width="32" height="32" viewBox="0 0 16 16" shapeRendering="crispEdges">
            <path d="M6 0 12 6H0z" fill="#d030e8" stroke="#780090" strokeWidth=".8" /><path d="M8.500 5.500h7v7h-7z" fill="#18b040" stroke="#107030" />
            <circle cx="10" cy="6" r="4" fill="#4898b0" /><circle cx="9.300" cy="6.300" r="3" fill="#00e8ff" /><path d="M5 6l5 5-5 5-5-5z" fill="#0050e0" />
          </Svg>
          <Caret $ml={8} $top={18} />
        </Head>
        <Head $col="3" $end $pad="0 10px 0 0">Msgs</Head>
        <Head $col="5" $black />
        <RowLine $col="1 / 2" /><RowLine $col="3 / 4" /><RowLine $col="5 / 6" />
        <Column $col="1" $gutter={9}>
          <Signal $pl={1}><Blank /><Diamond input /><Name>/pipelined/clk</Name></Signal>
          <Signal $pl={1} $on><Blank /><Diamond input /><Name>/pipelined/rst</Name></Signal>
          {values.map((v, i) => (
            <Signal key={`${v}-${i}`} $pl={1}><Expander /><Diamond /><Name>/pipelined/<Tail>reg_file_i...</Tail></Name></Signal>
          ))}
          <EndLine>
            <Svg width="7" height="14" viewBox="0 0 7 14"><path d="M1 0v14l6-7z" fill="none" stroke="#000" strokeWidth="1.500" /></Svg>
          </EndLine>
        </Column>
        <Column $col="3">
          <Signal $pl={2}>St1</Signal>
          <Signal $pl={2} $on>St0</Signal>
          {values.map((v, i) => <Signal key={`${v}-${i}`} $pl={3}>{v}</Signal>)}
          <EndLine />
        </Column>
        <WaveArea><Waves /></WaveArea>
        <Sash $col="2" /><Sash $col="4" />
      </Pane>
    </Window>
  );
}
